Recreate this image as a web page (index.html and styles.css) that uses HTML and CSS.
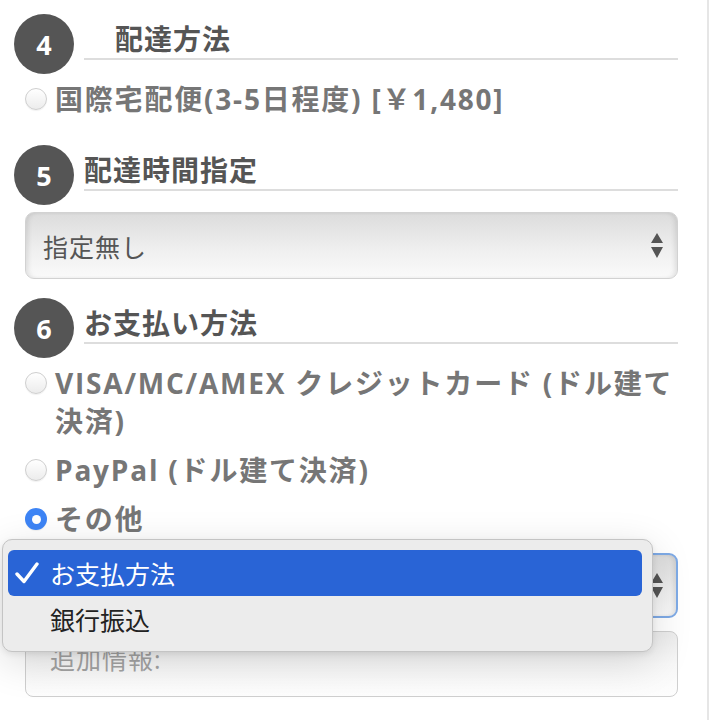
FILE: index.html
```html
<!DOCTYPE html>
<html lang="ja">
<head>
<meta charset="utf-8">
<title>Order form</title>
<link rel="stylesheet" href="styles.css">
</head>
<body>
<div class="page">
  <section class="step step-first">
    <div class="step-head">
      <span class="num">4</span>
      <h2 class="step-title indent">配達方法</h2>
    </div>
    <div class="options">
      <label class="radio-row"><span class="radio"></span><span class="label">国際宅配便(3-5日程度) [￥1,480]</span></label>
    </div>
  </section>

  <section class="step">
    <div class="step-head">
      <span class="num">5</span>
      <h2 class="step-title">配達時間指定</h2>
    </div>
    <div class="select">
      <span class="select-text">指定無し</span>
      <svg class="arrows" width="12" height="26" viewBox="0 0 12 26"><path d="M0 10 L6 0 L12 10Z M0 14 L12 14 L6 25Z" fill="#555"/></svg>
    </div>
  </section>

  <section class="step">
    <div class="step-head">
      <span class="num">6</span>
      <h2 class="step-title">お支払い方法</h2>
    </div>
    <div class="options">
      <label class="radio-row"><span class="radio"></span><span class="label">VISA/MC/AMEX クレジットカード (ドル建て決済)</span></label>
      <label class="radio-row"><span class="radio"></span><span class="label">PayPal (ドル建て決済)</span></label>
      <label class="radio-row"><span class="radio checked"></span><span class="label">その他</span></label>
    </div>
    <div class="select select-focus">
      <span class="select-text">お支払方法</span>
      <svg class="arrows" width="12" height="26" viewBox="0 0 12 26"><path d="M0 10 L6 0 L12 10Z M0 14 L12 14 L6 25Z" fill="#555"/></svg>
    </div>
    <div class="textarea">追加情報:</div>
  </section>

  <div class="popup">
    <div class="menu-item active">
      <svg class="check" width="24" height="22" viewBox="0 0 24 22"><path d="M2 12 L9 19.5 L22 2" fill="none" stroke="#fff" stroke-width="3.4" stroke-linecap="round" stroke-linejoin="round"/></svg>
      <span>お支払方法</span>
    </div>
    <div class="menu-item">
      <span class="check-slot"></span>
      <span>銀行振込</span>
    </div>
  </div>
</div>
</body>
</html>
```

FILE: styles.css
```css
* { box-sizing: border-box; }
html, body { margin: 0; padding: 0; background: #fff; }
body {
  font-family: "Open Sans", "Noto Sans CJK JP", sans-serif;
  width: 712px;
  height: 720px;
  overflow: hidden;
}
.page {
  position: relative;
  width: 709px;
  height: 720px;
  padding: 14px 29px 0 14px;
  border-right: 2px solid #e6e6e6;
}
.step + .step { margin-top: 19px; }
.step-first { padding-bottom: 8px; }
.step-head {
  display: flex;
  align-items: flex-start;
}
.num {
  flex: none;
  width: 60px;
  height: 60px;
  border-radius: 50%;
  background: #555;
  color: #fff;
  font-weight: 700;
  font-size: 27px;
  display: flex;
  align-items: center;
  justify-content: center;
  line-height: 1;
}
.step-title {
  flex: 1;
  margin: 0 0 0 10px;
  height: 46px;
  padding-top: 6px;
  line-height: 38px;
  font-size: 28px;
  font-weight: 700;
  letter-spacing: 1px;
  color: #555;
  border-bottom: 2px solid #ddd;
}
.step-title.indent { padding-left: 31px; }
.options { margin-top: 6px; }
.radio-row {
  display: flex;
  align-items: flex-start;
  margin-left: 11px;
  line-height: 38px;
  font-size: 28px;
  font-weight: 700;
  letter-spacing: 1.8px;
  color: #767676;
}
.radio-row + .radio-row { margin-top: 11px; }
.radio {
  flex: none;
  width: 22px;
  height: 22px;
  margin: 8px 8px 0 0;
  border-radius: 50%;
  border: 1px solid #cfcfcf;
  background: linear-gradient(#ffffff, #ececec);
  box-shadow: 0 1px 1px rgba(0,0,0,0.06);
  display: flex;
  align-items: center;
  justify-content: center;
}
.radio.checked {
  border: none;
  background: #3d84f5;
}
.radio.checked::after {
  content: "";
  width: 9px;
  height: 9px;
  border-radius: 50%;
  background: #fff;
}
.select {
  margin: 7px 0 0 11px;
  height: 67px;
  border: 1px solid #d2d2d2;
  border-radius: 9px;
  background: linear-gradient(#dcdcdc, #f0f0f0 60%, #fafafa);
  box-shadow: inset 4px 0 5px -2px rgba(0,0,0,0.10), inset -4px 0 5px -2px rgba(0,0,0,0.10);
  display: flex;
  align-items: center;
  justify-content: space-between;
  padding: 0 14px 0 17px;
}
.select-text {
  font-size: 25px;
  letter-spacing: 1px;
  color: #555;
}
.arrows { flex: none; }
.select-focus {
  margin-top: 15px;
  height: 65px;
  border: 2px solid #7eaae6;
  padding-right: 13px;
}
.textarea {
  margin: 13px 0 0 11px;
  height: 66px;
  border: 1px solid #cfcfcf;
  border-radius: 8px;
  background: linear-gradient(#ececec, #f8f8f8 50%, #fdfdfd);
  padding: 10px 0 0 24px;
  font-size: 25px;
  letter-spacing: 1px;
  line-height: 34px;
  color: #a3a3a3;
}
.popup {
  position: absolute;
  left: 2px;
  top: 539px;
  width: 651px;
  height: 113px;
  background: #ececec;
  border: 1px solid #c4c4c4;
  border-radius: 10px;
  padding: 10px 10px 0 5px;
  box-shadow: 0 10px 40px rgba(0,0,0,0.14), 0 2px 6px rgba(0,0,0,0.08);
}
.menu-item {
  display: flex;
  align-items: center;
  height: 46px;
  border-radius: 6px;
  padding-left: 7px;
  font-size: 25px;
  color: #222;
}
.menu-item.active {
  background: #2964d6;
  color: #fff;
}
.check { flex: none; margin-right: 11px; }
.check-slot { flex: none; width: 35px; }
```
